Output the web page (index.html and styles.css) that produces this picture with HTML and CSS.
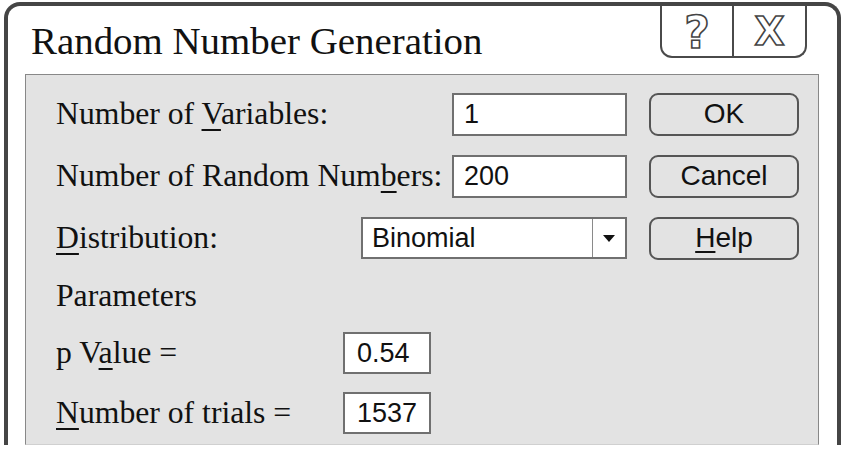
FILE: index.html
```html
<!DOCTYPE html>
<html lang="en">
<head>
  <meta charset="UTF-8">
  <title>Random Number Generation</title>
  <link rel="stylesheet" href="styles.css">
</head>
<body>
  <div class="window">
    <!-- Title bar -->
    <div class="title-bar">
      <h1 class="title">Random Number Generation</h1>
      <div class="title-controls">
        <span class="ctl ctl-help">?</span>
        <span class="ctl ctl-close">X</span>
      </div>
    </div>

    <!-- Dialog body -->
    <div class="panel">
      <div class="row">
        <label class="label">Number of <u>V</u>ariables:</label>
        <div class="field">1</div>
        <button class="btn">OK</button>
      </div>
      <div class="row">
        <label class="label">Number of Random Num<u>b</u>ers:</label>
        <div class="field">200</div>
        <button class="btn">Cancel</button>
      </div>
      <div class="row">
        <label class="label"><u>D</u>istribution:</label>
        <div class="select">
          <span class="select-value">Binomial</span>
          <span class="select-arrow"></span>
        </div>
        <button class="btn"><u>H</u>elp</button>
      </div>

      <div class="section-title">Parameters</div>

      <div class="param-row">
        <label class="label param-label">p V<u>a</u>lue =</label>
        <div class="field small">0.54</div>
      </div>
      <div class="param-row">
        <label class="label param-label"><u>N</u>umber of trials =</label>
        <div class="field small">1537</div>
      </div>
    </div>
  </div>
</body>
</html>
```

FILE: styles.css
```css
body {
  margin: 0;
  background-color: #fff;
  color: #111;
  font-family: "Liberation Serif", "Times New Roman", serif;
}

u {
  text-decoration-thickness: 2px;
  text-underline-offset: 5px;
}

/* Window frame */
.window {
  box-sizing: border-box;
  width: 837px;
  margin: 2px 0 0 4px;
  border: 4px solid #454545;
  border-bottom: none;
  border-radius: 16px 16px 0 0;
}

.title-bar {
  display: flex;
  align-items: flex-start;
  height: 68px;
}

.title {
  margin: 0;
  padding: 12px 0 0 23px;
  font-size: 38.9px;
  font-weight: normal;
  line-height: normal;
}

.title-controls {
  display: flex;
  margin-left: auto;
  margin-right: 30px;
  height: 50px;
  border: 2px solid #4a4a4a;
  border-top: none;
  border-radius: 0 0 12px 12px;
}

.ctl {
  display: flex;
  align-items: center;
  justify-content: center;
  font-family: "DejaVu Sans", sans-serif;
  font-weight: bold;
  color: #fff;
  -webkit-text-stroke: 1.6px #444;
  line-height: 1;
}

.ctl-help {
  width: 70px;
  font-size: 44px;
  padding-top: 4px;
  border-right: 2px solid #4a4a4a;
}

.ctl-close {
  width: 71px;
  font-size: 39px;
}

/* Gray panel */
.panel {
  margin: 0 18px 0 17px;
  padding: 8px 19px 1px 30px;
  background-color: #e3e3e3;
  border: 1px solid #888;
  border-bottom-color: #d0d0d0;
}

.label {
  font-size: 31.7px;
  white-space: nowrap;
}

.row {
  display: flex;
  align-items: center;
  height: 62px;
}

.field {
  box-sizing: border-box;
  width: 175px;
  height: 43px;
  margin-left: auto;
  padding: 0 10px;
  background-color: #fff;
  border: 2px solid #707070;
  font-family: "Liberation Sans", Arial, sans-serif;
  font-size: 27px;
  line-height: 39px;
}

.select {
  box-sizing: border-box;
  display: flex;
  width: 266px;
  height: 42px;
  margin-left: auto;
  background-color: #fff;
  border: 2px solid #707070;
  font-family: "Liberation Sans", Arial, sans-serif;
  font-size: 27px;
  line-height: 38px;
}

.select-value {
  flex-grow: 1;
  padding-left: 9px;
}

.select-arrow {
  position: relative;
  width: 32px;
  border-left: 1.5px solid #8a8a8a;
}

.select-arrow::after {
  content: "";
  position: absolute;
  left: 10px;
  top: 16px;
  border-left: 6px solid transparent;
  border-right: 6px solid transparent;
  border-top: 7px solid #111;
}

.btn {
  box-sizing: border-box;
  width: 150px;
  height: 43px;
  margin-left: 22px;
  padding: 0;
  background-color: #e3e3e3;
  border: 2px solid #555;
  border-radius: 9px;
  color: #111;
  font-family: "Liberation Sans", Arial, sans-serif;
  font-size: 28px;
}

.btn u {
  text-underline-offset: 4px;
}

.section-title {
  display: flex;
  align-items: center;
  height: 54px;
  font-size: 31.7px;
}

.param-row {
  display: flex;
  align-items: center;
  height: 60px;
}

.param-label {
  width: 287px;
}

.field.small {
  width: 88px;
  height: 42px;
  margin-left: 0;
  padding-left: 12px;
}
```
